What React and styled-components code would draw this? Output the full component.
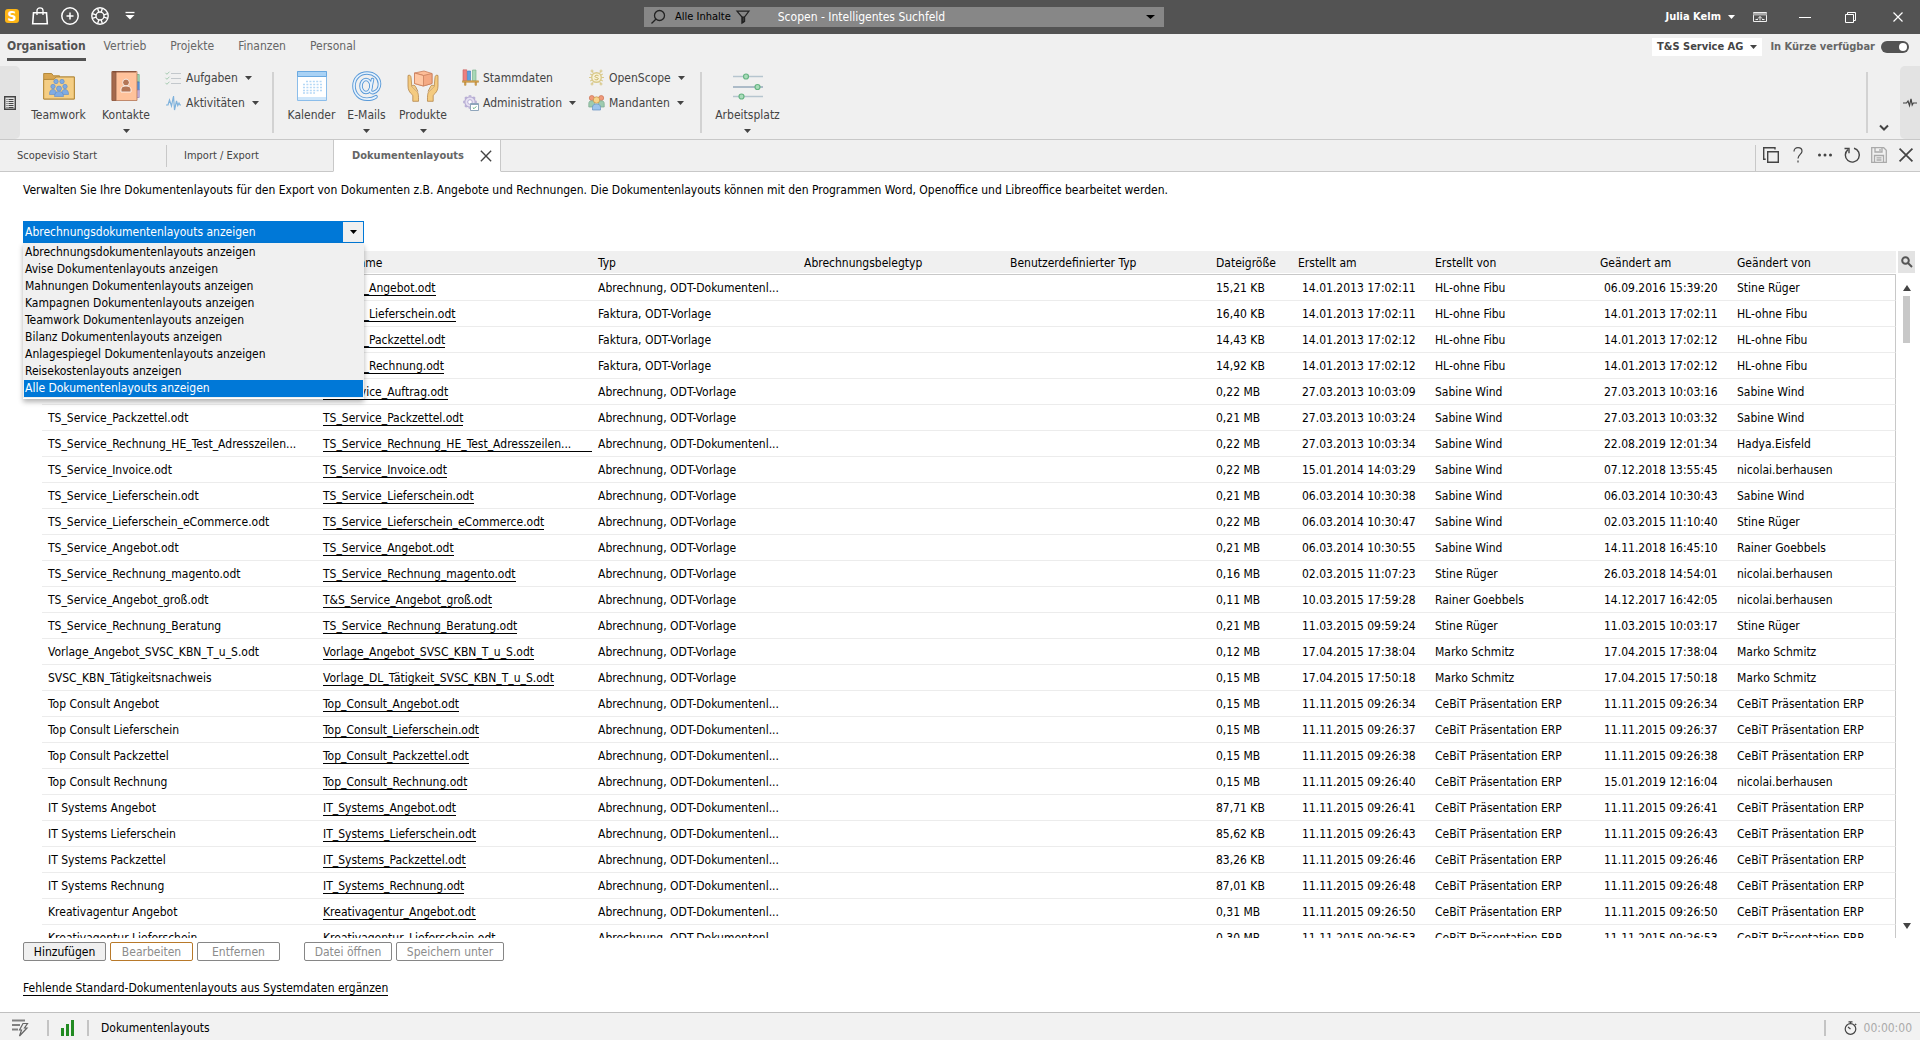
import React, { useState } from "react";
import styled, { createGlobalStyle, css } from "styled-components";

const FILTERS = [
  "Abrechnungsdokumentenlayouts anzeigen",
  "Avise Dokumentenlayouts anzeigen",
  "Mahnungen Dokumentenlayouts anzeigen",
  "Kampagnen Dokumentenlayouts anzeigen",
  "Teamwork Dokumentenlayouts anzeigen",
  "Bilanz Dokumentenlayouts anzeigen",
  "Anlagespiegel Dokumentenlayouts anzeigen",
  "Reisekostenlayouts anzeigen",
  "Alle Dokumentenlayouts anzeigen",
];

const COLUMNS = [
  { title: "Name", width: 275 },
  { title: "Dateiname", width: 275 },
  { title: "Typ", width: 206 },
  { title: "Abrechnungsbelegtyp", width: 206 },
  { title: "Benutzerdefinierter Typ", width: 206 },
  { title: "Dateigröße", width: 82 },
  { title: "Erstellt am", width: 137 },
  { title: "Erstellt von", width: 165 },
  { title: "Geändert am", width: 137 },
  { title: "Geändert von" },
];

const DOC = "Abrechnung, ODT-Dokumentenl...";
const VORLAGE = "Abrechnung, ODT-Vorlage";
const FAKTURA = "Faktura, ODT-Vorlage";
const CEBIT = "CeBiT Präsentation ERP";

// name, file, type, size, created, created by, changed, changed by
const ROWS = [
  ["Vorlage Angebot", "Vorlage_Angebot.odt", DOC, "15,21 KB", "14.01.2013 17:02:11", "HL-ohne Fibu", "06.09.2016 15:39:20", "Stine Rüger"],
  ["Vorlage Lieferschein", "Vorlage_Lieferschein.odt", FAKTURA, "16,40 KB", "14.01.2013 17:02:11", "HL-ohne Fibu", "14.01.2013 17:02:11", "HL-ohne Fibu"],
  ["Vorlage Packzettel", "Vorlage_Packzettel.odt", FAKTURA, "14,43 KB", "14.01.2013 17:02:12", "HL-ohne Fibu", "14.01.2013 17:02:12", "HL-ohne Fibu"],
  ["Vorlage Rechnung", "Vorlage_Rechnung.odt", FAKTURA, "14,92 KB", "14.01.2013 17:02:12", "HL-ohne Fibu", "14.01.2013 17:02:12", "HL-ohne Fibu"],
  ["TS_Service_Auftrag.odt", "TS_Service_Auftrag.odt", VORLAGE, "0,22 MB", "27.03.2013 10:03:09", "Sabine Wind", "27.03.2013 10:03:16", "Sabine Wind"],
  ["TS_Service_Packzettel.odt", "TS_Service_Packzettel.odt", VORLAGE, "0,21 MB", "27.03.2013 10:03:24", "Sabine Wind", "27.03.2013 10:03:32", "Sabine Wind"],
  ["TS_Service_Rechnung_HE_Test_Adresszeilen...", "TS_Service_Rechnung_HE_Test_Adresszeilen...", DOC, "0,22 MB", "27.03.2013 10:03:34", "Sabine Wind", "22.08.2019 12:01:34", "Hadya.Eisfeld"],
  ["TS_Service_Invoice.odt", "TS_Service_Invoice.odt", VORLAGE, "0,22 MB", "15.01.2014 14:03:29", "Sabine Wind", "07.12.2018 13:55:45", "nicolai.berhausen"],
  ["TS_Service_Lieferschein.odt", "TS_Service_Lieferschein.odt", VORLAGE, "0,21 MB", "06.03.2014 10:30:38", "Sabine Wind", "06.03.2014 10:30:43", "Sabine Wind"],
  ["TS_Service_Lieferschein_eCommerce.odt", "TS_Service_Lieferschein_eCommerce.odt", VORLAGE, "0,22 MB", "06.03.2014 10:30:47", "Sabine Wind", "02.03.2015 11:10:40", "Stine Rüger"],
  ["TS_Service_Angebot.odt", "TS_Service_Angebot.odt", VORLAGE, "0,21 MB", "06.03.2014 10:30:55", "Sabine Wind", "14.11.2018 16:45:10", "Rainer Goebbels"],
  ["TS_Service_Rechnung_magento.odt", "TS_Service_Rechnung_magento.odt", VORLAGE, "0,16 MB", "02.03.2015 11:07:23", "Stine Rüger", "26.03.2018 14:54:01", "nicolai.berhausen"],
  ["TS_Service_Angebot_groß.odt", "T&S_Service_Angebot_groß.odt", VORLAGE, "0,11 MB", "10.03.2015 17:59:28", "Rainer Goebbels", "14.12.2017 16:42:05", "nicolai.berhausen"],
  ["TS_Service_Rechnung_Beratung", "TS_Service_Rechnung_Beratung.odt", VORLAGE, "0,21 MB", "11.03.2015 09:59:24", "Stine Rüger", "11.03.2015 10:03:17", "Stine Rüger"],
  ["Vorlage_Angebot_SVSC_KBN_T_u_S.odt", "Vorlage_Angebot_SVSC_KBN_T_u_S.odt", VORLAGE, "0,12 MB", "17.04.2015 17:38:04", "Marko Schmitz", "17.04.2015 17:38:04", "Marko Schmitz"],
  ["SVSC_KBN_Tätigkeitsnachweis", "Vorlage_DL_Tätigkeit_SVSC_KBN_T_u_S.odt", VORLAGE, "0,15 MB", "17.04.2015 17:50:18", "Marko Schmitz", "17.04.2015 17:50:18", "Marko Schmitz"],
  ["Top Consult Angebot", "Top_Consult_Angebot.odt", DOC, "0,15 MB", "11.11.2015 09:26:34", CEBIT, "11.11.2015 09:26:34", CEBIT],
  ["Top Consult Lieferschein", "Top_Consult_Lieferschein.odt", DOC, "0,15 MB", "11.11.2015 09:26:37", CEBIT, "11.11.2015 09:26:37", CEBIT],
  ["Top Consult Packzettel", "Top_Consult_Packzettel.odt", DOC, "0,15 MB", "11.11.2015 09:26:38", CEBIT, "11.11.2015 09:26:38", CEBIT],
  ["Top Consult Rechnung", "Top_Consult_Rechnung.odt", DOC, "0,15 MB", "11.11.2015 09:26:40", CEBIT, "15.01.2019 12:16:04", "nicolai.berhausen"],
  ["IT Systems Angebot", "IT_Systems_Angebot.odt", DOC, "87,71 KB", "11.11.2015 09:26:41", CEBIT, "11.11.2015 09:26:41", CEBIT],
  ["IT Systems Lieferschein", "IT_Systems_Lieferschein.odt", DOC, "85,62 KB", "11.11.2015 09:26:43", CEBIT, "11.11.2015 09:26:43", CEBIT],
  ["IT Systems Packzettel", "IT_Systems_Packzettel.odt", DOC, "83,26 KB", "11.11.2015 09:26:46", CEBIT, "11.11.2015 09:26:46", CEBIT],
  ["IT Systems Rechnung", "IT_Systems_Rechnung.odt", DOC, "87,01 KB", "11.11.2015 09:26:48", CEBIT, "11.11.2015 09:26:48", CEBIT],
  ["Kreativagentur Angebot", "Kreativagentur_Angebot.odt", DOC, "0,31 MB", "11.11.2015 09:26:50", CEBIT, "11.11.2015 09:26:50", CEBIT],
  ["Kreativagentur Lieferschein", "Kreativagentur_Lieferschein.odt", DOC, "0,30 MB", "11.11.2015 09:26:53", CEBIT, "11.11.2015 09:26:53", CEBIT],
];

/* ICONS */
function Caret({ color = "#444", size = 7 }) {
  return (
    <svg width={size} height={4} viewBox="0 0 7 4" preserveAspectRatio="none" aria-hidden="true">
      <path d="M0 0h7L3.5 4z" fill={color} />
    </svg>
  );
}

function Glyph({ w = 18, h = w, box = `0 0 ${w} ${h}`, stroke = "#fff", sw = 1.3, children }) {
  return (
    <svg width={w} height={h} viewBox={box} fill="none" stroke={stroke} strokeWidth={sw} aria-hidden="true">
      {children}
    </svg>
  );
}

const BagIcon = () => (
  <Glyph sw={1.6}>
    <path d="M2.500 5.800h13l.8 11H1.700z" />
    <path d="M6 8V3.600C6 2 7.200.9 9 .9s3 1.100 3 2.700V8" strokeWidth="1.300" />
  </Glyph>
);

const PlusIcon = () => (
  <Glyph sw={1.5}>
    <circle cx="9" cy="9" r="8.2" />
    <path d="M9 5.500v7M5.500 9h7" />
  </Glyph>
);

const BuoyIcon = () => (
  <Glyph sw={1.4}>
    <circle cx="9" cy="9" r="8.2" />
    <circle cx="9" cy="9" r="4" />
    <path d="M6.600 1.400 7.800 5M11.400 1.400 10.200 5M6.600 16.600 7.800 13M11.400 16.600 10.200 13M1.400 6.600 5 7.800M1.400 11.400 5 10.200M16.600 6.600 13 7.800M16.600 11.400 13 10.200" />
  </Glyph>
);

const CustomizeIcon = () => (
  <Glyph>
    <path d="M4.500 5.500h9" />
    <path d="M4.500 8h9L9 12.500z" fill="#fff" stroke="none" />
  </Glyph>
);

const LoupeIcon = () => (
  <Glyph w={16} stroke="#222" sw={1.3}>
    <circle cx="9.500" cy="6.500" r="5" />
    <path d="M5.800 10.200 1.500 14.500" />
  </Glyph>
);

const FunnelIcon = () => (
  <Glyph w={14} stroke="#222" sw={1.2}>
    <path d="M1 1.200h12L8.600 7v4.500L6 13.200V7z" />
    <path d="M6.300 7.200h2v4l-2 1.300z" fill="#444" />
  </Glyph>
);

const RibbonToggleIcon = () => (
  <Glyph w={14} h={12} stroke="#eee" sw={1}>
    <path d="M.5 1.500h13v9H.5z" />
    <path d="M.5 2.500h13v1.500H.5z" fill="#aaa" stroke="#aaa" />
    <path d="M7 9.500v-4M5 7.500 7 5.500 9 7.500M2.500 8.500h2.500M9 8.500h2.500" />
  </Glyph>
);

const MinimizeIcon = () => (
  <Glyph w={14} sw={1}>
    <path d="M0 7.500h12" />
  </Glyph>
);

const RestoreIcon = () => (
  <Glyph w={14} sw={1}>
    <path d="M.5 4.500h8v8h-8zM2.500 4.500v-2h8v8h-2" />
  </Glyph>
);

const CloseIcon = ({ color = "#fff", size = 14, sw = 1.2 }) => (
  <Glyph w={size} box="0 0 14 14" stroke={color} sw={sw}>
    <path d="M2.500 2.500l9 9M11.500 2.500l-9 9" />
  </Glyph>
);

const PanelIcon = () => (
  <Glyph w={12} h={14} stroke="#444" sw={1.4}>
    <path d="M.7.7h10.600v12.600H.7z" />
    <path d="M2.500 3.500h1M2.500 5.500h1M2.500 7.500h1M2.500 9.500h1M2.500 11.500h1M4.500 3.500h5M4.500 5.500h5M4.500 7.500h5M4.500 9.500h5M4.500 11.500h5" strokeWidth="1" />
  </Glyph>
);

const PulseIcon = () => (
  <Glyph w={14} h={10} stroke="#444" sw={1.2}>
    <path d="M0 5h3.500L5 3l1.500 4.500L8 .8 9.200 7 10.300 5H14" />
  </Glyph>
);

const TeamworkIcon = () => (
  <Glyph w={32} h={28} sw={1} stroke="#b48a3c">
    <path d="M.7 27V1.500h8l1.800 2.300h6V5h15v22z" fill="#d9a650" />
    <path d="M.7 27V7.500L11 7.300 13 5h18.300v22z" fill="#f5ce84" />
    <g fill="#7fabe3" stroke="#5c8ac8" strokeWidth=".6">
      <circle cx="13" cy="9.500" r="2.200" />
      <circle cx="19" cy="9.500" r="2.200" />
      <circle cx="10" cy="14.500" r="2.200" />
      <circle cx="22" cy="14.500" r="2.200" />
      <circle cx="16" cy="16.500" r="2.500" />
      <path d="M6.500 22c0-3 1.300-4.500 3.500-4.500s3 1.500 3.200 3v2h-6.700zM25.500 22c0-3-1.300-4.500-3.500-4.500s-3 1.500-3.200 3v2h6.700z" />
      <path d="M11.500 24.500c0-3.500 1.800-5 4.500-5s4.500 1.500 4.500 5z" />
    </g>
  </Glyph>
);

const ContactsIcon = () => (
  <Glyph w={30} h={32} sw={0.8}>
    <path d="M24 4.500h4.200v7.500H24z" fill="#a4d6b4" stroke="#6fae86" />
    <path d="M24 12h4.200v8H24z" fill="#5595e0" stroke="#4679bd" />
    <path d="M24 20h4.200v7.500H24z" fill="#c9b7e0" stroke="#9d88bd" />
    <path d="M1 1.500h25v29H1z" fill="#ffc29b" stroke="#b37556" />
    <path d="M1 1.500h4v29H1z" fill="#a5694c" stroke="#8d5a42" />
    <path d="M2 1.800h23" stroke="#7d4a34" strokeWidth="1.200" />
    <circle cx="15" cy="12.500" r="3.400" fill="#b37556" />
    <path d="M10 22v-2.500c0-2.500 2-3.500 5-3.500s5 1 5 3.500V22z" fill="#b37556" />
  </Glyph>
);

const TasksIcon = () => (
  <Glyph w={17} h={14} stroke="#c3c8cc" sw={1}>
    <path d="M6 2.500h10M6 7.500h10M6 12.500h10" />
    <path d="M.5 1.800l1.400 1.500L4.500.7M.5 6.800l1.400 1.500 2.600-2.600M.5 11.800l1.400 1.500 2.600-2.600" stroke="#a5cbb0" />
  </Glyph>
);

const ActivityIcon = () => (
  <Glyph w={17} h={16} stroke="#7fb2dc" sw={1.2}>
    <path d="M1 10h2l1.500-5 2 6L8.500 1l1 14 2-9 1.300 4.500L14 8l1 2h1" />
  </Glyph>
);

const CalendarIcon = () => (
  <Glyph w={32} h={32} sw={1} stroke="#8bbdea">
    <path d="M1.500 1.500h29v29h-29z" fill="#fff" />
    <path d="M1.500 1.500h29v5h-29z" fill="#a9d2f5" stroke="#6aa9e0" />
    <path d="M2 27h28v3H2z" fill="#cfe6fa" stroke="none" />
    <path d="M10 11.500h16M7 14.500h19M7 17.500h19M7 20.500h19M7 23h12" strokeDasharray="2 1.400" strokeWidth="1.600" stroke="#b5d8f6" />
  </Glyph>
);

const AT_LOOP =
  "M21.500 9.500 19.500 19c-.5 3 1 4 3 3.500 3.500-1 6-4.500 6-8.500C28.500 7.500 23 3 16 3 8.500 3 3 8.500 3 16s5.500 13.200 13 13.200c3.800 0 7-1 9-2.500";

const MailIcon = () => (
  <Glyph w={32} h={32} sw={3.6}>
    <g stroke="#5a9ad8" strokeLinecap="round">
      <ellipse cx="15" cy="16" rx="5" ry="6.500" />
      <path d={AT_LOOP} />
    </g>
    <g stroke="#e6f2fd" strokeWidth="1.700" strokeLinecap="round">
      <ellipse cx="15" cy="16" rx="5" ry="6.500" />
      <path d={AT_LOOP} />
    </g>
  </Glyph>
);

const ProductsIcon = () => (
  <Glyph w={32} h={32} sw={0.8} stroke="#b5874a">
    <path d="M1 5.500c1.800-.8 2.800 0 3 1.800l.8 9 5.500 5.500c1 1.500 1.300 3 1.200 9.500H5.800v-6C2.500 22.500 1 20 1 16z" fill="#f4cb80" />
    <path d="M5 16c1.500-1.500 3-.5 3.500.5l2.500 5" fill="#f4cb80" />
    <path d="M31 5.500c-1.800-.8-2.800 0-3 1.800l-.8 9-5.500 5.500c-1 1.500-1.300 3-1.200 9.500h5.700v-6C29.500 22.500 31 20 31 16z" fill="#f4cb80" />
    <path d="M27 16c-1.500-1.500-3-.5-3.500.5l-2.500 5" fill="#f4cb80" />
    <path d="M7.500 3 17 1l8 2.500v10L16 16l-8.500-2.500z" fill="#fdbd97" stroke="#c97f5c" />
    <path d="M7.500 3 16.500 5.500 25 3.500v10L16.500 16z" fill="#f4a983" stroke="#c97f5c" />
    <path d="M7.500 3l9 2.500V16l-9-2.500z" fill="#ffc7a3" stroke="#c97f5c" />
  </Glyph>
);

const BooksIcon = () => (
  <Glyph w={17} h={17} sw={0.6}>
    <path d="M1 .8h3.800v11H1z" fill="#ec8080" stroke="#c65a5a" />
    <path d="M5.500 2h3v9.800h-3z" fill="#5ca0e0" stroke="#4079b8" />
    <path d="M10.500 1h3.500v10.800h-3.500z" fill="#a8d8b8" stroke="#70ab84" />
    <path d="M.5 11.800h16v1.500H.5zM2.500 13.300H4v3H2.500zM13 13.300h1.500v3H13z" fill="#d9a650" stroke="#b98a3d" />
  </Glyph>
);

const AdminIcon = () => (
  <Glyph w={17} h={17} sw={1.2} stroke="#b7add4">
    <path d="M8 1.200v1.600M8 13.200v1.600M1.200 8h1.600M13.200 8h1.600M3.200 3.200l1.200 1.200M3.200 12.800l1.200-1.200M12.800 3.200l-1.200 1.200" strokeWidth="2.600" />
    <circle cx="8" cy="8" r="5.200" fill="#e6e1f2" />
    <circle cx="8" cy="8" r="2.300" strokeWidth="1" fill="#fff" />
    <path d="M8.500 9.500h8v7h-8z" fill="#fff" stroke="#8fa5bb" strokeWidth="1" />
    <path d="M8.500 10.500h8" stroke="#8fa5bb" strokeWidth="1" />
    <path d="M10.800 13.500l1.200 1.200 2.300-2.300" stroke="#5bab78" strokeWidth="1" />
  </Glyph>
);

const OpenScopeIcon = () => (
  <Glyph w={17} h={17} sw={1} stroke="#d9c98a">
    <circle cx="8.500" cy="8.500" r="4.800" fill="#f8f2d8" strokeWidth="1.400" />
    <path d="M10.500 6.800c-1-.8-3.600-.8-3.600.6s3.400.9 3.400 2.300-2.800 1.400-3.800.4" stroke="#c9b460" />
    <path d="M5.500 4.500 4 2M11.500 4.500 13 2M5.500 12.500 4 15M11.500 12.500l1.500 2.500M3.500 8.500H1M13.500 8.500H16M4.500 6 2 5M12.500 6 15 5M4.500 11 2 12M12.500 11l2.500 1" />
    <circle cx="4" cy="2" r="1" />
    <circle cx="13" cy="2" r="1" />
    <circle cx="4" cy="15" r="1" />
    <circle cx="13" cy="15" r="1" />
  </Glyph>
);

const ClientsIcon = () => (
  <Glyph w={17} h={17} sw={0.7} stroke="#c59445">
    <circle cx="3.800" cy="4" r="2.500" fill="#ef9a7a" stroke="#cc7355" />
    <circle cx="13.200" cy="4" r="2.500" fill="#ef9a7a" stroke="#cc7355" />
    <path d="M.8 13V9.500c0-2 1.200-2.700 3-2.700s3 .7 3 2.700V13z" fill="#9dcbb0" stroke="#78a78b" />
    <path d="M10.200 13V9.500c0-2 1.200-2.700 3-2.700s3 .7 3 2.700V13z" fill="#9dcbb0" stroke="#78a78b" />
    <circle cx="8.500" cy="6" r="3.200" fill="#f8d58d" />
    <path d="M4.500 16v-2.500c0-2.600 1.600-3.500 4-3.500s4 .9 4 3.500V16z" fill="#9cc4ec" stroke="#6591c2" />
  </Glyph>
);

const SlidersIcon = () => (
  <Glyph w={32} h={32} sw={1.6} stroke="#b6c5cf">
    <path d="M1 6.500h30M1 26.500h30" />
    <path d="M1 17h30" stroke="#7f98ad" strokeWidth="1.200" />
    <g fill="#a9dbb9" stroke="#66b583" strokeWidth="1.200">
      <circle cx="14" cy="6.500" r="2.500" />
      <circle cx="25.500" cy="17" r="2.500" />
      <circle cx="9.500" cy="26.500" r="2.500" />
    </g>
  </Glyph>
);

const ChevronIcon = () => (
  <Glyph w={10} h={8} stroke="#444" sw={2}>
    <path d="M1 1.500 5 5.500 9 1.500" />
  </Glyph>
);

const WindowsIcon = () => (
  <Glyph w={16} stroke="#444" sw={1.4}>
    <path d="M4.700 4.700h10.600v10.600H4.700zM12 2.500V.7H.7v11.600h2" />
  </Glyph>
);

const HelpIcon = () => (
  <Glyph w={16} stroke="#444" sw={1.2}>
    <path d="M4 4.500C4 2 5.600.7 8 .7s4 1.300 4 3.500c0 3-4 3.500-4 7.300M8 13.500v2" />
  </Glyph>
);

const DotsIcon = () => (
  <Glyph w={16}>
    <g fill="#444" stroke="none">
      <circle cx="2.500" cy="8" r="1.500" />
      <circle cx="8" cy="8" r="1.500" />
      <circle cx="13.500" cy="8" r="1.500" />
    </g>
  </Glyph>
);

const ReloadIcon = () => (
  <Glyph w={16} stroke="#444" sw={1.4}>
    <path d="M10 1.300A7 7 0 1 1 4 2.600" />
    <path d="M.5 1.500H5v4.800" />
  </Glyph>
);

const SaveIcon = () => (
  <Glyph w={16} stroke="#aaa" sw={1.3}>
    <path d="M.7.700h12L15.300 3.300v12H.7z" />
    <path d="M4 1v4h7V1M9 2v2M3.500 15V8.500h9V15M5.500 10.800h5M5.500 13h5" />
  </Glyph>
);

const FlashListIcon = () => (
  <Glyph w={16} h={18} stroke="#808080" sw={1.8}>
    <path d="M0 1.500h13M0 6h8M0 10.500h6" />
    <path d="M11 4.500h4.500L12.500 9h2.500L7.500 17l2-6H7.500z" stroke="#666" strokeWidth="1.200" fill="#eee" />
  </Glyph>
);

const SignalIcon = () => (
  <Glyph w={14} h={16} stroke="#228b22" sw={3}>
    <path d="M1.500 16V8M6.500 16V4M11.500 16V0" />
  </Glyph>
);

const StopwatchIcon = () => (
  <Glyph w={14} stroke="#444" sw={1.2}>
    <circle cx="6.500" cy="8" r="5.3" />
    <path d="M4.500.8h4M6.500 1v1.500M11 2.800l1.200 1.200M4 6l2.500 2" />
  </Glyph>
);

const SearchSmallIcon = () => (
  <Glyph w={12} stroke="#555" sw={2}>
    <circle cx="4.500" cy="4.500" r="3.3" />
    <path d="M7 7l4 4" />
  </Glyph>
);
/* ICONS */

export default function App() {
  const [filter, setFilter] = useState(FILTERS[0]);
  const [open, setOpen] = useState(true);
  const [active, setActive] = useState(FILTERS.length - 1);

  const choose = (name) => {
    setFilter(name);
    setOpen(false);
  };

  return (
    <Page>
      <GlobalStyle />

      {/* TITLE BAR */}
      <TitleBar>
        <QuickBar>
          <Logo>S</Logo>
          <IconButton aria-label="Marktplatz"><BagIcon /></IconButton>
          <IconButton aria-label="Neu"><PlusIcon /></IconButton>
          <IconButton aria-label="Hilfe"><BuoyIcon /></IconButton>
          <IconButton aria-label="Anpassen"><CustomizeIcon /></IconButton>
        </QuickBar>
        <SearchBox>
          <LoupeIcon />
          <ScopeButton>
            Alle Inhalte <FunnelIcon />
          </ScopeButton>
          <SearchInput aria-label="Suche" placeholder="Scopen - Intelligentes Suchfeld" />
          <IconButton aria-label="Suchverlauf"><Caret color="#000" size={9} /></IconButton>
        </SearchBox>
        <WindowBar>
          <UserButton>
            Julia Kelm <Caret color="#fff" />
          </UserButton>
          <WindowButtons>
            <IconButton aria-label="Menüband"><RibbonToggleIcon /></IconButton>
            <IconButton aria-label="Minimieren"><MinimizeIcon /></IconButton>
            <IconButton aria-label="Verkleinern"><RestoreIcon /></IconButton>
            <IconButton aria-label="Schließen"><CloseIcon /></IconButton>
          </WindowButtons>
        </WindowBar>
      </TitleBar>
      {/* TITLE BAR */}

      {/* RIBBON */}
      <ModuleBar>
        <Modules>
          <ModuleLink href="#organisation" $active>Organisation</ModuleLink>
          <ModuleLink href="#vertrieb">Vertrieb</ModuleLink>
          <ModuleLink href="#projekte">Projekte</ModuleLink>
          <ModuleLink href="#finanzen">Finanzen</ModuleLink>
          <ModuleLink href="#personal">Personal</ModuleLink>
        </Modules>
        <CompanyButton>
          T&amp;S Service AG <Caret />
        </CompanyButton>
        <SwitchLabel>
          In Kürze verfügbar
          <Switch type="checkbox" role="switch" defaultChecked />
        </SwitchLabel>
      </ModuleBar>

      <Ribbon>
        <SideHandle aria-label="Navigation" $side="right"><PanelIcon /></SideHandle>
        <RibbonItems>
          <LargeItem icon={<TeamworkIcon />} label="Teamwork" width={57} />
          <LargeItem icon={<ContactsIcon />} label="Kontakte" width={50} menu />
          <SmallGroup $width={93}>
            <SmallItem icon={<TasksIcon />} label="Aufgaben" menu />
            <SmallItem icon={<ActivityIcon />} label="Aktivitäten" menu />
          </SmallGroup>
          <RibbonDivider />
          <LargeItem icon={<CalendarIcon />} label="Kalender" width={47} />
          <LargeItem icon={<MailIcon />} label="E-Mails" width={35} menu />
          <LargeItem icon={<ProductsIcon />} label="Produkte" width={50} menu />
          <SmallGroup $width={112}>
            <SmallItem icon={<BooksIcon />} label="Stammdaten" />
            <SmallItem icon={<AdminIcon />} label="Administration" menu />
          </SmallGroup>
          <SmallGroup $width={98}>
            <SmallItem icon={<OpenScopeIcon />} label="OpenScope" menu />
            <SmallItem icon={<ClientsIcon />} label="Mandanten" menu />
          </SmallGroup>
          <RibbonDivider />
          <LargeItem icon={<SlidersIcon />} label="Arbeitsplatz" width={63} menu />
        </RibbonItems>
        <RibbonDivider />
        <CollapseButton aria-label="Menüband einklappen"><ChevronIcon /></CollapseButton>
        <SideHandle aria-label="Aktivitätenleiste" $side="left"><PulseIcon /></SideHandle>
      </Ribbon>
      {/* RIBBON */}

      {/* TABS */}
      <TabBar>
        <Tab $width={167}><TabLink href="#start">Scopevisio Start</TabLink></Tab>
        <Tab $width={166} $last><TabLink href="#import">Import / Export</TabLink></Tab>
        <Tab $width={168} $active>
          <TabLink href="#layouts">Dokumentenlayouts</TabLink>
          <IconButton aria-label="Tab schließen"><CloseIcon color="#444" size={16} /></IconButton>
        </Tab>
        <TabTools>
          <ToolList>
            <IconButton aria-label="Fenster"><WindowsIcon /></IconButton>
            <IconButton aria-label="Hilfe"><HelpIcon /></IconButton>
            <IconButton aria-label="Mehr"><DotsIcon /></IconButton>
            <IconButton aria-label="Aktualisieren"><ReloadIcon /></IconButton>
            <IconButton aria-label="Speichern" disabled><SaveIcon /></IconButton>
            <IconButton aria-label="Schließen"><CloseIcon color="#444" size={20} /></IconButton>
          </ToolList>
        </TabTools>
      </TabBar>
      {/* TABS */}

      {/* CONTENT */}
      <Content>
        <Intro>
          Verwalten Sie Ihre Dokumentenlayouts für den Export von Dokumenten z.B. Angebote und Rechnungen. Die
          Dokumentenlayouts können mit den Programmen Word, Openoffice und Libreoffice bearbeitet werden.
        </Intro>

        <Combo>
          <ComboSelect
            aria-label="Layouts filtern"
            value={filter}
            onMouseDown={(e) => {
              e.preventDefault();
              setOpen(!open);
            }}
            onChange={(e) => choose(e.target.value)}
          >
            {FILTERS.map((name) => (
              <option key={name}>{name}</option>
            ))}
          </ComboSelect>
          <ComboArrow><Caret color="#000" /></ComboArrow>
          {open && (
            <ComboList role="listbox" aria-label="Layouts">
              {FILTERS.map((name, i) => (
                <ComboOption
                  key={name}
                  role="option"
                  aria-selected={i === active}
                  $active={i === active}
                  onMouseEnter={() => setActive(i)}
                  onClick={() => choose(name)}
                >
                  {name}
                </ComboOption>
              ))}
            </ComboList>
          )}
        </Combo>

        <TableArea>
          <TableClip>
            <Table>
              <colgroup>
                {COLUMNS.map((c) => (
                  <col key={c.title} width={c.width} />
                ))}
              </colgroup>
              <thead>
                <tr>
                  {COLUMNS.map((c) => (
                    <HeadCell key={c.title}>{c.title}</HeadCell>
                  ))}
                </tr>
              </thead>
              <tbody>
                {ROWS.map(([name, file, type, size, created, createdBy, changed, changedBy]) => (
                  <tr key={name}>
                    <Cell>{name}</Cell>
                    <Cell>
                      <FileLink href={`#${file}`} $cut={file.endsWith("...")}>{file}</FileLink>
                    </Cell>
                    <Cell>{type}</Cell>
                    <Cell />
                    <Cell />
                    <Cell>{size}</Cell>
                    <Cell $date>{created}</Cell>
                    <Cell>{createdBy}</Cell>
                    <Cell $date>{changed}</Cell>
                    <Cell>{changedBy}</Cell>
                  </tr>
                ))}
              </tbody>
            </Table>
          </TableClip>
          <ScrollRail>
            <RailSearch aria-label="Tabelle durchsuchen"><SearchSmallIcon /></RailSearch>
            <RailTrack>
              <RailArrow />
              <RailThumb />
              <RailArrow $down />
            </RailTrack>
          </ScrollRail>
        </TableArea>

        <Actions>
          <ActionButton $width={83}>Hinzufügen</ActionButton>
          <ActionButton $width={83} $focus disabled>Bearbeiten</ActionButton>
          <ActionButton $width={83} disabled>Entfernen</ActionButton>
          <ActionGap />
          <ActionButton $width={88} disabled>Datei öffnen</ActionButton>
          <ActionButton $width={108} disabled>Speichern unter</ActionButton>
        </Actions>
        <MissingLink href="#systemdaten">Fehlende Standard-Dokumentenlayouts aus Systemdaten ergänzen</MissingLink>
      </Content>
      {/* CONTENT */}

      {/* STATUS BAR */}
      <StatusBar>
        <FlashListIcon />
        <StatusDivider />
        <SignalIcon />
        <StatusDivider />
        <StatusText>Dokumentenlayouts</StatusText>
        <StatusDivider />
        <Timer>
          <StopwatchIcon />
          00:00:00
        </Timer>
      </StatusBar>
      {/* STATUS BAR */}
    </Page>
  );
}

function LargeItem({ icon, label, width, menu }) {
  return (
    <LargeButton $width={width}>
      <LargeIcon>{icon}</LargeIcon>
      <LargeLabel>{label}</LargeLabel>
      {menu && <Caret />}
    </LargeButton>
  );
}

function SmallItem({ icon, label, menu }) {
  return (
    <SmallButton>
      <SmallIcon>{icon}</SmallIcon>
      <SmallLabel>{label}</SmallLabel>
      {menu && <Caret />}
    </SmallButton>
  );
}

const GlobalStyle = createGlobalStyle`
  * {
    box-sizing: border-box;
  }
  body {
    margin: 0;
    background: #fff;
    color: #000;
    font-family: "DejaVu Sans Condensed", "DejaVu Sans", sans-serif;
    font-size: 12px;
    line-height: 16px;
  }
  button, input, select {
    font: inherit;
    color: inherit;
  }
  svg {
    display: block;
    flex: none;
    overflow: visible;
  }
`;

const plainButton = css`
  display: flex;
  align-items: center;
  padding: 0;
  border: 0;
  background: none;
  white-space: nowrap;
`;

const Page = styled.div`
  display: flex;
  flex-direction: column;
  height: 100vh;
  min-height: 480px;
`;
const IconButton = styled.button`
  ${plainButton}
  justify-content: center;
`;

/* title bar */
const TitleBar = styled.header`
  display: grid;
  grid-template-columns: minmax(0, 644fr) minmax(0, 520px) minmax(0, 756fr);
  align-items: center;
  height: 34px;
  flex: none;
  background: #535353;
  color: #fff;
`;
const QuickBar = styled.div`
  display: flex;
  align-items: center;
  gap: 12px;
  padding: 0 0 2px 5px;
`;
const Logo = styled.span`
  width: 14px;
  height: 14px;
  border-radius: 3px;
  background: #fdb515;
  font-size: 14px;
  font-weight: bold;
  line-height: 14px;
  text-align: center;
`;
const SearchBox = styled.div`
  display: flex;
  align-items: center;
  height: 20px;
  padding: 0 9px 0 6px;
  background: #878787;
`;
const ScopeButton = styled.button`
  ${plainButton}
  gap: 5px;
  margin: 0 28px 0 9px;
  color: #000;
  font-size: 11px;
`;
const SearchInput = styled.input`
  flex: 1;
  min-width: 0;
  padding: 0;
  border: 0;
  outline: 0;
  background: none;
  &::placeholder {
    color: #fff;
    opacity: 1;
  }
`;
const WindowBar = styled.div`
  display: flex;
  align-items: center;
  justify-content: flex-end;
  gap: 18px;
  padding-right: 15px;
`;
const UserButton = styled.button`
  ${plainButton}
  gap: 7px;
  font-size: 11px;
  font-weight: bold;
`;
const WindowButtons = styled.div`
  display: flex;
  gap: 32px;
`;

/* ribbon */
const ModuleBar = styled.div`
  display: flex;
  align-items: center;
  flex: none;
  height: 32px;
  padding: 0 11px 0 7px;
  background: #f0f0f0;
`;
const Modules = styled.nav`
  display: flex;
  flex: 1;
  gap: 12px;
  height: 27px;
  align-self: flex-start;
`;
const ModuleLink = styled.a`
  padding: 4px ${(p) => (p.$active ? 0 : 6)}px 0;
  border-bottom: 3px solid ${(p) => (p.$active ? "#535353" : "transparent")};
  color: ${(p) => (p.$active ? "#535353" : "#666")};
  font-weight: ${(p) => (p.$active ? "bold" : "normal")};
  text-decoration: none;
`;
const CompanyButton = styled.button`
  ${plainButton}
  gap: 7px;
  height: 18px;
  margin: 0 8px 6px 0;
  padding: 0 5px;
  background: #fff;
  color: #444;
  font-size: 11px;
  font-weight: bold;
`;
const SwitchLabel = styled.label`
  display: flex;
  align-items: center;
  gap: 6px;
  margin-bottom: 6px;
  color: #666;
  font-size: 11px;
  font-weight: bold;
`;
const Switch = styled.input`
  display: flex;
  align-items: center;
  justify-content: flex-end;
  appearance: none;
  width: 28px;
  height: 12px;
  margin: 0;
  padding: 0 2px;
  border-radius: 6px;
  background: #535353;
  &::after {
    content: "";
    width: 8px;
    height: 8px;
    border-radius: 50%;
    background: #fff;
  }
`;
const Ribbon = styled.div`
  display: flex;
  flex: none;
  height: 74px;
  border-bottom: 1px solid #c8c8c8;
  background: #f0f0f0;
`;
const SideHandle = styled.button`
  ${plainButton}
  justify-content: center;
  width: 20px;
  background: #e3e3e3;
  border-radius: ${(p) => (p.$side === "right" ? "0 5px 5px 0" : "5px 0 0 5px")};
`;
const RibbonItems = styled.div`
  display: flex;
  flex: 1;
  gap: 14px;
  padding-left: 10px;
`;
const LargeButton = styled.button`
  ${plainButton}
  flex-direction: column;
  width: ${(p) => p.$width}px;
  padding-top: 4px;
  color: #444;
`;
const LargeIcon = styled.span`
  display: flex;
  align-items: center;
  height: 32px;
`;
const LargeLabel = styled.span`
  margin: 5px 0 6px;
`;
const SmallGroup = styled.div`
  width: ${(p) => p.$width}px;
`;
const SmallButton = styled.button`
  ${plainButton}
  height: 25px;
  padding-bottom: 2px;
  color: #444;
`;
const SmallIcon = styled.span`
  display: flex;
  align-items: center;
  width: 21px;
`;
const SmallLabel = styled.span`
  margin-right: 7px;
`;
const RibbonDivider = styled.span`
  flex: none;
  width: 2px;
  margin: 6px 0;
  background: #d2d2d2;
`;
const CollapseButton = styled.button`
  ${plainButton}
  align-items: flex-end;
  justify-content: center;
  width: 32px;
  padding-bottom: 7px;
`;

/* tabs */
const TabBar = styled.div`
  display: flex;
  flex: none;
  height: 32px;
  background: #f0f0f0;
`;
const Tab = styled.div`
  display: flex;
  align-items: center;
  width: ${(p) => p.$width}px;
  padding-left: 17px;
  border-bottom: 1px solid #c8c8c8;
  color: #444;
  font-size: 11px;
  &::after {
    content: "";
    display: ${(p) => (p.$last || p.$active ? "none" : "block")};
    height: 22px;
    margin-left: auto;
    border-left: 1px solid #c8c8c8;
  }
  ${(p) =>
    p.$active &&
    css`
      justify-content: space-between;
      padding: 0 6px 0 18px;
      border-left: 1px solid #c8c8c8;
      border-right: 1px solid #c8c8c8;
      border-bottom-color: #fff;
      background: #fff;
      color: #666;
      font-weight: bold;
    `}
`;
const TabLink = styled.a`
  color: inherit;
  text-decoration: none;
`;
const TabTools = styled.div`
  display: flex;
  flex: 1;
  justify-content: flex-end;
  padding: 5px 6px 0 0;
  border-bottom: 1px solid #c8c8c8;
`;
const ToolList = styled.div`
  display: flex;
  gap: 11px;
  padding: 0 0 6px 7px;
  border-left: 1px solid #c8c8c8;
  & > button {
    width: 16px;
  }
`;

/* content */
const Content = styled.main`
  display: flex;
  flex: 1;
  flex-direction: column;
  min-height: 0;
  padding: 10px 5px 16px 23px;
`;
const Intro = styled.p`
  margin: 0 0 23px;
`;
const Combo = styled.div`
  position: relative;
  width: 341px;
  margin-bottom: 8px;
`;
const ComboSelect = styled.select`
  display: block;
  appearance: none;
  width: 100%;
  height: 22px;
  padding: 0 24px 0 2px;
  border: 0;
  border-radius: 0;
  outline: 0;
  background: #0078d7;
  color: #fff;
`;
const ComboArrow = styled.span`
  position: absolute;
  top: 1px;
  right: 1px;
  display: grid;
  place-items: center;
  width: 20px;
  height: 20px;
  background: #f0f0f0;
  pointer-events: none;
`;
const ComboList = styled.ul`
  position: absolute;
  z-index: 1;
  top: 100%;
  left: 0;
  right: 0;
  margin: 0;
  padding: 1px;
  border-bottom: 1px solid #fff;
  list-style: none;
  background: #f0f0f0;
  box-shadow: 0 3px 5px rgba(0, 0, 0, 0.3);
`;
const ComboOption = styled.li`
  padding-left: 1px;
  line-height: 17px;
  white-space: nowrap;
  background: ${(p) => (p.$active ? "#0078d7" : "transparent")};
  color: ${(p) => (p.$active ? "#fff" : "#000")};
`;
const TableArea = styled.div`
  display: flex;
  flex: 1;
  gap: 2px;
  min-height: 0;
  padding-left: 19px;
`;
const TableClip = styled.div`
  flex: 1;
  min-width: 0;
  overflow: hidden;
`;
const Table = styled.table`
  width: 100%;
  border-spacing: 0;
  table-layout: fixed;
`;
const HeadCell = styled.th`
  height: 24px;
  padding: 0 0 0 6px;
  border-bottom: 1px solid #c8c8c8;
  background: linear-gradient(#f0f0f0 22px, #fff 22px);
  font-weight: normal;
  text-align: left;
  white-space: nowrap;
`;
const Cell = styled.td`
  height: 26px;
  padding: 0 0 0 ${(p) => (p.$date ? 10 : 6)}px;
  border-bottom: 1px solid #ececec;
  overflow: hidden;
  text-overflow: ellipsis;
  white-space: nowrap;
  &:last-child {
    border-right: 1px solid #c8c8c8;
  }
`;
const underlined = css`
  border-bottom: 1px solid #000;
  color: #000;
  text-decoration: none;
  line-height: 14px;
`;
const FileLink = styled.a`
  ${underlined}
  display: inline-block;
  width: ${(p) => (p.$cut ? "100%" : "auto")};
  vertical-align: middle;
`;
const ScrollRail = styled.div`
  display: flex;
  flex-direction: column;
  width: 17px;
`;
const RailSearch = styled.button`
  ${plainButton}
  justify-content: center;
  height: 22px;
  background: #e3e3e3;
`;
const RailTrack = styled.div`
  display: flex;
  flex: 1;
  flex-direction: column;
  align-items: center;
  gap: 5px;
  padding: 12px 0 9px;
`;
const RailArrow = styled.span`
  border: 4px solid transparent;
  border-top: ${(p) => (p.$down ? "6px solid #444" : "0")};
  border-bottom: ${(p) => (p.$down ? "0" : "6px solid #444")};
  margin-top: ${(p) => (p.$down ? "auto" : "0")};
`;
const RailThumb = styled.span`
  width: 7px;
  height: 47px;
  background: #c8c8c8;
`;
const Actions = styled.div`
  display: flex;
  gap: 4px;
  margin: 4px 0 20px;
`;
const ActionButton = styled.button`
  width: ${(p) => p.$width}px;
  height: 19px;
  padding: 0;
  border: 1px solid ${(p) => (p.$focus ? "#b8792a" : "#868686")};
  border-radius: 2px;
  background: #f0f0f0;
  line-height: 16px;
  &:disabled {
    background: #fff;
    color: #8c8c8c;
  }
`;
const ActionGap = styled.span`
  width: 16px;
`;
const MissingLink = styled.a`
  ${underlined}
  align-self: flex-start;
`;

/* status bar */
const StatusBar = styled.footer`
  display: flex;
  align-items: center;
  flex: none;
  gap: 12px;
  height: 28px;
  padding: 3px 8px 0 12px;
  border-top: 1px solid #c0c0c0;
  background: #f2f2f2;
  & > svg:first-child {
    margin-right: 7px;
  }
`;
const StatusDivider = styled.span`
  width: 2px;
  height: 16px;
  background: #c4c4c4;
`;
const StatusText = styled.span`
  flex: 1;
`;
const Timer = styled.time`
  display: flex;
  align-items: center;
  gap: 6px;
  padding-left: 6px;
  color: #aaa;
`;
